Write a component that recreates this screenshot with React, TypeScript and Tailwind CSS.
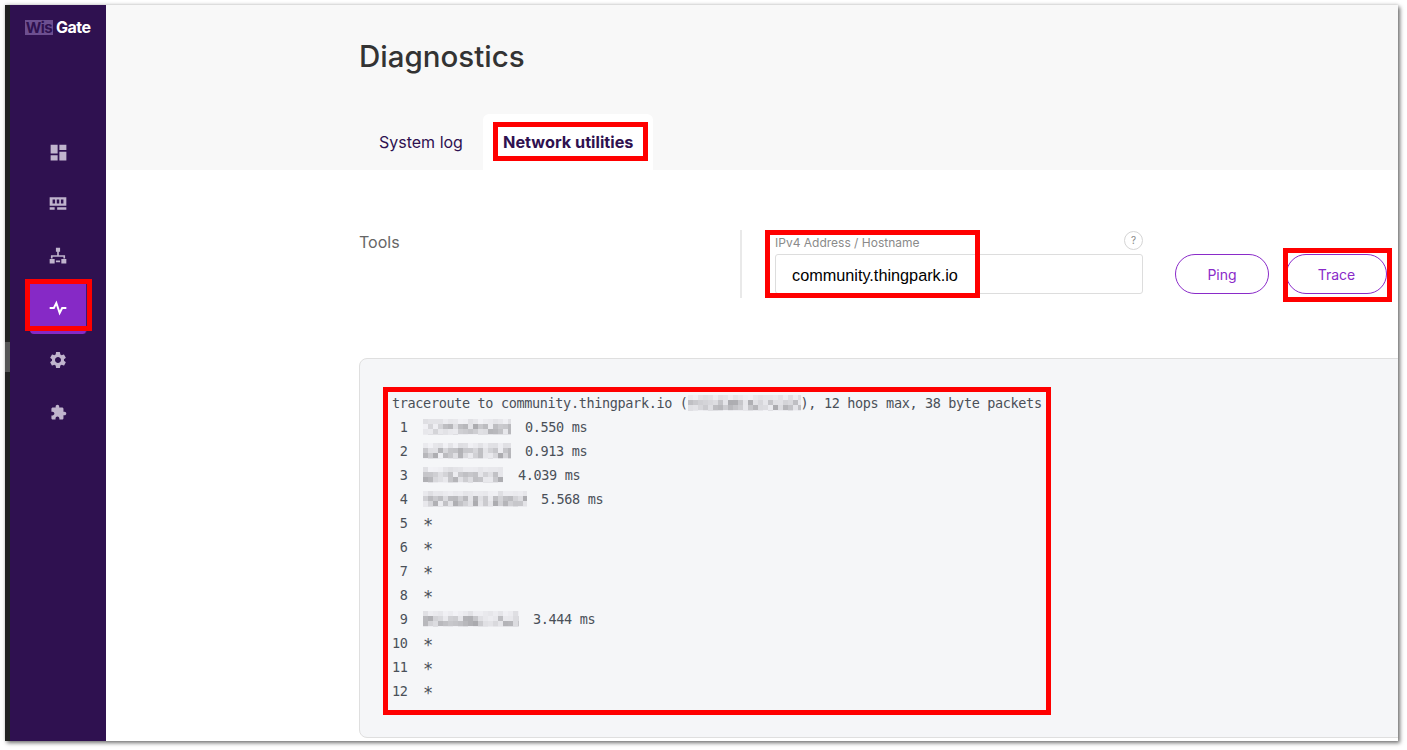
import React from "react";

const UI = "font-['Inter','Noto_Sans',sans-serif]";

function Mosaic({ w, seed, h = 16 }: { w: number; seed: number; h?: number }) {
  const cell = 5;
  const cols = Math.ceil(w / cell);
  const rows = Math.ceil(h / cell);
  const rects: React.ReactNode[] = [];
  let s = seed;
  for (let y = 0; y < rows; y++) {
    for (let x = 0; x < cols; x++) {
      s = (s * 9301 + 49297) % 233280;
      const r = s / 233280;
      const mid = y === 1 || y === 2;
      const v = mid ? 170 + r * 70 : 222 + r * 20;
      const c = `rgb(${Math.round(v)},${Math.round(v)},${Math.round(v + 4)})`;
      rects.push(<rect key={`${x}-${y}`} x={x * cell} y={y * cell} width={cell} height={cell} fill={c} />);
    }
  }
  return (
    <svg width={w} height={h} viewBox={`0 0 ${w} ${h}`} className="shrink-0 block">
      {rects}
    </svg>
  );
}

const navIcons: { size: number; el: React.ReactNode }[] = [
  { size: 21, el: <path d="M3 13h8V3H3v10zm0 8h8v-6H3v6zm10 0h8V11h-8v10zm0-18v6h8V3h-8z" /> },
  { size: 20, el: <path fillRule="evenodd" d="M2 4h20v10H2V4zm3.500 2.500v5h3v-5h-3zm5 0v5h3v-5h-3zm5 0v5h3v-5h-3zM2 16h6v3H2v-3zm9 0h11v3H11v-3z" /> },
  { size: 20, el: <path d="M9.500 2h5v5h-5V2zM11 7h2v4h7.500v4h-2v-2H5.500v2h-2v-4H11V7zM2 15.500h6V21H2v-5.500zm14 0h6V21h-6v-5.500zM9.500 17.500h5v2h-5v-2z" /> },
  { size: 0, el: null },
  { size: 20, el: <path d="M19.140 12.940c.040-.300.060-.610.060-.940 0-.320-.020-.640-.070-.940l2.030-1.580a.49.49 0 0 0 .120-.610l-1.920-3.320a.488.488 0 0 0-.590-.220l-2.390.960c-.500-.380-1.030-.700-1.620-.940l-.360-2.540a.484.484 0 0 0-.480-.410h-3.840c-.240 0-.430.170-.470.410l-.360 2.540c-.590.240-1.130.570-1.620.940l-2.390-.960c-.220-.080-.470 0-.590.220L2.740 8.870c-.120.210-.080.470.120.610l2.030 1.580c-.050.300-.090.630-.090.940s.020.640.070.940l-2.030 1.580a.49.49 0 0 0-.120.610l1.920 3.320c.120.220.370.290.590.220l2.390-.960c.500.380 1.030.700 1.620.940l.360 2.540c.050.240.240.410.480.410h3.840c.240 0 .440-.170.470-.410l.360-2.540c.590-.240 1.130-.560 1.620-.940l2.390.960c.220.080.470 0 .590-.220l1.920-3.320c.120-.220.070-.470-.120-.610l-2.010-1.580zM12 15.600c-1.980 0-3.600-1.620-3.600-3.600s1.620-3.600 3.600-3.600 3.600 1.620 3.600 3.600-1.620 3.600-3.600 3.600z" /> },
  { size: 17, el: <path d="M20.500 11H19V7c0-1.100-.9-2-2-2h-4V3.500C13 2.120 11.880 1 10.500 1S8 2.120 8 3.500V5H4c-1.100 0-1.990.9-1.990 2v3.800H3.500c1.490 0 2.700 1.210 2.700 2.700s-1.210 2.700-2.700 2.700H2V20c0 1.100.9 2 2 2h3.800v-1.500c0-1.490 1.210-2.700 2.700-2.700 1.490 0 2.700 1.210 2.700 2.700V22H17c1.100 0 2-.9 2-2v-4h1.500c1.380 0 2.500-1.120 2.500-2.500S21.880 11 20.500 11z" /> },
];

function Sidebar() {
  return (
    <aside className="flex shrink-0 h-full">
      <div className="w-[5px] h-full bg-[#232323] flex flex-col pt-[337px]">
        <div className="h-[30px] bg-[#555555]" />
      </div>
      <div className="w-[96px] h-full bg-[#2f1150] flex flex-col">
        <div className="h-[121px] pt-[15px] pl-[15px]">
          <div className="flex items-center font-['Inter',sans-serif] font-bold text-[15px] leading-[15px] tracking-[-0.5px]">
            <span className="bg-[#6d4f90] text-[#2f1150] h-[15px] w-[28px] text-center">Wis</span>
            <span className="text-white ml-[3px] text-[16px]">Gate</span>
          </div>
        </div>
        <nav className="flex flex-col items-start pl-[20px]">
          {navIcons.map((icon, i) =>
            icon.el ? (
              <div key={i} className="w-[56px] h-[52px] flex items-center justify-center">
                <svg width={icon.size} height={icon.size} viewBox="0 0 24 24" fill="#c0b4cd">{icon.el}</svg>
              </div>
            ) : (
              <div key={i} className="w-[57px] h-[50px] mt-[2px] bg-[#8629c6] rounded-b-[4px] border-r border-[#3a1a70] flex items-center justify-center pb-[3px]">
                <svg width="20" height="20" viewBox="0 0 24 24" fill="none" stroke="#ffffff" strokeWidth="2.400" strokeLinejoin="miter">
                  <path d="M2 12h5l3-6 4 12 3-6h5" />
                </svg>
              </div>
            )
          )}
        </nav>
      </div>
    </aside>
  );
}

function Row({ n, children }: { n: string; children?: React.ReactNode }) {
  return (
    <div className="h-6 flex items-center whitespace-pre">
      <span className="w-[31px] shrink-0">{n}</span>
      {children ?? <span className="text-[17px] leading-none pt-[5px]">*</span>}
    </div>
  );
}

export default function App() {
  return (
    <div className={`relative w-[1407px] h-[750px] bg-white pt-[5px] pl-[5px] overflow-hidden ${UI}`}>
      <div className="flex w-[1393px] h-[736px] bg-white overflow-hidden shadow-[2px_2px_4px_rgba(0,0,0,0.55),0_-1px_3px_rgba(0,0,0,0.12)]">
        <Sidebar />
        <main className="flex-1 min-w-0 flex flex-col">
          <header className="h-[165px] shrink-0 bg-[#f8f8f8] pl-[253px] flex flex-col">
            <h1 className="text-[29.5px] leading-[34px] font-medium text-[#333333] mt-[34px]">Diagnostics</h1>
            <div className="flex mt-[41px] items-stretch h-[56px]">
              <div className="w-[124px] pl-[20px] flex items-center text-[16px] text-[#2f1150]">System log</div>
              <div className="w-[170px] bg-white rounded-t-[6px] pl-[20px] flex items-center text-[16.25px] font-bold text-[#2f1150]">Network utilities</div>
            </div>
          </header>
          <section className="flex-1 pl-[253px]">
            <div className="flex h-[68px] mt-[60px]">
              <div className="w-[381px] pt-[3px] text-[16px] leading-[19px] text-[#666666]">Tools</div>
              <div className="w-[2px] h-full bg-[#e9e9e9]" />
              <div className="w-[368px] ml-[33px]">
                <div className="flex justify-between items-start h-[24px]">
                  <span className="text-[12px] leading-[15px] mt-[5px] text-[#8a8a8a]">IPv4 Address / Hostname</span>
                  <span className="w-[19px] h-[19px] rounded-full border border-[#d5d5d5] text-[10px] leading-[17px] text-center text-[#888888] mt-[1px]">?</span>
                </div>
                <div className="h-[40px] border border-[#dddddd] rounded-[3px] pl-[16px] pt-[2px] flex items-center font-['Liberation_Sans',sans-serif] text-[16.25px] text-black">community.thingpark.io</div>
              </div>
              <div className="flex items-start gap-[17px] ml-[32px] mt-[24px]">
                <button className="w-[94px] h-[40px] rounded-full border border-[#8a2bc9] bg-white text-[14px] text-[#8a2bc9]">Ping</button>
                <button className="w-[101px] h-[40px] rounded-full border border-[#8a2bc9] bg-white text-[14px] text-[#8a2bc9]">Trace</button>
              </div>
            </div>
            <div className="mt-[60px] h-[380px] w-[1060px] bg-[#f5f6f8] border border-[#dfdfdf] rounded-[8px] pl-[32px] pt-[32px] font-['DejaVu_Sans_Mono',monospace] text-[13.5px] tracking-[-0.35px] text-[#4a5058]">
              <div className="h-6 flex items-center whitespace-pre">
                <span>traceroute to community.thingpark.io (</span>
                <Mosaic w={113} seed={11} />
                <span>), 12 hops max, 38 byte packets</span>
              </div>
              <Row n=" 1"><Mosaic w={88} seed={21} /><span className="ml-[14px]">0.550 ms</span></Row>
              <Row n=" 2"><Mosaic w={88} seed={35} /><span className="ml-[14px]">0.913 ms</span></Row>
              <Row n=" 3"><Mosaic w={80} seed={47} /><span className="ml-[15px]">4.039 ms</span></Row>
              <Row n=" 4"><Mosaic w={104} seed={59} /><span className="ml-[14px]">5.568 ms</span></Row>
              <Row n=" 5" />
              <Row n=" 6" />
              <Row n=" 7" />
              <Row n=" 8" />
              <Row n=" 9"><Mosaic w={96} seed={73} /><span className="ml-[14px]">3.444 ms</span></Row>
              <Row n="10" />
              <Row n="11" />
              <Row n="12" />
            </div>
          </section>
        </main>
      </div>

      <div className="absolute left-[25px] top-[279px] w-[67px] h-[52px] border-[5px] border-[#ff0000]" />
      <div className="absolute left-[493px] top-[122px] w-[155px] h-[39px] border-[5px] border-[#ff0000]" />
      <div className="absolute left-[765px] top-[230px] w-[215px] h-[68px] border-[5px] border-[#ff0000]" />
      <div className="absolute left-[1283px] top-[248px] w-[109px] h-[54px] border-[5px] border-[#ff0000]" />
      <div className="absolute left-[383px] top-[387px] w-[668px] h-[328px] border-[5px] border-[#ff0000]" />
    </div>
  );
}
